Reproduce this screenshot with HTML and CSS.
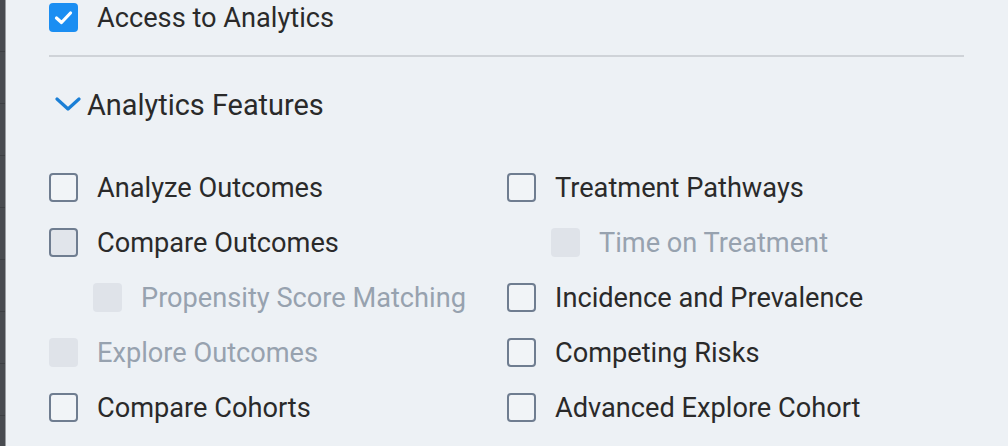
FILE: index.html
```html
<!DOCTYPE html>
<html>
<head>
<meta charset="utf-8">
<link rel="stylesheet" href="styles.css">
</head>
<body>
<div class="page">
  <div class="rail"></div>
  <div class="panel">
    <div class="row top-row">
      <span class="box checked"><svg viewBox="0 0 29 29" width="29" height="29"><polyline points="7.5,15 12.5,19.5 21.5,10" fill="none" stroke="#fff" stroke-width="3.2" stroke-linecap="round" stroke-linejoin="round"/></svg></span>
      <span class="label">Access to Analytics</span>
    </div>
    <div class="divider"></div>
    <div class="section-head">
      <svg class="chev" viewBox="0 0 26 14" width="26" height="14"><polyline points="2,2 13,12 24,2" fill="none" stroke="#1a7fd6" stroke-width="3.2" stroke-linecap="round" stroke-linejoin="round"/></svg>
      <span class="head-text">Analytics Features</span>
    </div>
    <div class="grid">
      <div class="col">
        <div class="row"><span class="box"></span><span class="label">Analyze Outcomes</span></div>
        <div class="row"><span class="box shaded"></span><span class="label">Compare Outcomes</span></div>
        <div class="row sub"><span class="box disabled"></span><span class="label muted">Propensity Score Matching</span></div>
        <div class="row"><span class="box disabled"></span><span class="label muted">Explore Outcomes</span></div>
        <div class="row"><span class="box"></span><span class="label">Compare Cohorts</span></div>
      </div>
      <div class="col">
        <div class="row"><span class="box"></span><span class="label">Treatment Pathways</span></div>
        <div class="row sub"><span class="box disabled"></span><span class="label muted">Time on Treatment</span></div>
        <div class="row"><span class="box"></span><span class="label">Incidence and Prevalence</span></div>
        <div class="row"><span class="box"></span><span class="label">Competing Risks</span></div>
        <div class="row"><span class="box"></span><span class="label">Advanced Explore Cohort</span></div>
      </div>
    </div>
  </div>
</div>
</body>
</html>
```

FILE: styles.css
```css
html, body {
  margin: 0;
  padding: 0;
  background: #edf1f5;
}
body {
  font-family: Roboto, "Liberation Sans", sans-serif;
  color: #2a2a2a;
  overflow: hidden;
}
.page {
  display: flex;
  height: 446px;
  width: 1008px;
  overflow: hidden;
}
.rail {
  width: 5px;
  flex: none;
  background-color: #484b50;
  background-image: repeating-linear-gradient(to bottom, transparent 0, transparent 51px, #3c3f43 51px, #3c3f43 52px);
  border-right: 1px solid #9a9da1;
}
.panel {
  flex: 1;
  padding-left: 43px;
  padding-right: 44px;
  border-right: 1px solid #e2e6ea;
}
.row {
  display: flex;
  align-items: center;
  height: 55px;
}
.top-row {
  height: 34px;
}
.top-row .label {
  padding-top: 2px;
}
.box {
  width: 29px;
  height: 29px;
  box-sizing: border-box;
  border: 2px solid #6f7d90;
  border-radius: 4px;
  background: #f1f4f7;
  flex: none;
  margin-right: 19px;
}
.box.checked {
  background: #1b8ef2;
  border: none;
  display: flex;
}
.box.checked svg {
  display: block;
}
.box.shaded {
  background: #e1e5eb;
}
.box.disabled {
  background: #dfe3e9;
  border: none;
}
.label {
  font-size: 27.2px;
  white-space: nowrap;
}
.label.muted {
  color: #97a2af;
}
.sub {
  padding-left: 44px;
}
.divider {
  height: 2px;
  background: #cfd3d8;
  margin-top: 21px;
  width: 915px;
}
.section-head {
  display: flex;
  align-items: center;
  height: 40px;
  margin-top: 27px;
}
.chev {
  margin-left: 6px;
  margin-right: 6px;
  display: block;
}
.head-text {
  font-size: 28.9px;
  white-space: nowrap;
  padding-top: 2px;
}
.grid {
  display: grid;
  grid-template-columns: 458px 1fr;
  margin-top: 36px;
}
```
